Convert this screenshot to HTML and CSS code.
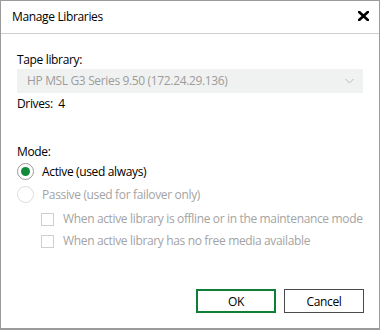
FILE: index.html
```html
<!DOCTYPE html>
<html>
<head>
<meta charset="utf-8">
<link rel="stylesheet" href="styles.css">
</head>
<body>
<div class="dialog">
  <div class="header">
    <span class="title">Manage Libraries</span>
    <svg class="close" width="11" height="10" viewBox="0 0 11 10"><path d="M1.2 1 L9.8 9 M9.8 1 L1.2 9" stroke="#000" stroke-width="2.6" stroke-linecap="square"/></svg>
  </div>
  <div class="content">
    <div class="label">Tape library:</div>
    <div class="select">
      <span>HP MSL G3 Series 9.50 (172.24.29.136)</span>
      <svg width="9" height="6" viewBox="0 0 9 6"><path d="M0.5 1 L4.5 5 L8.5 1" fill="none" stroke="#b8b8b8" stroke-width="1"/></svg>
    </div>
    <div class="drives">Drives:&nbsp; 4</div>
    <div class="mode">Mode:</div>
    <div class="row radio-row">
      <span class="radio on"><span class="dot"></span></span>
      <span>Active (used always)</span>
    </div>
    <div class="row radio-row disabled">
      <span class="radio"></span>
      <span>Passive (used for failover only)</span>
    </div>
    <div class="row check-row disabled first">
      <span class="check"></span>
      <span class="clip">When active library is offline or in the maintenance mode</span>
    </div>
    <div class="row check-row disabled">
      <span class="check"></span>
      <span>When active library has no free media available</span>
    </div>
  </div>
  <div class="buttons">
    <button class="btn ok">OK</button>
    <button class="btn">Cancel</button>
  </div>
</div>
</body>
</html>
```
FILE: styles.css
```css
* { box-sizing: border-box; }
html, body { margin: 0; padding: 0; background: #fff; }
body {
  font-family: "Open Sans", "Noto Sans", sans-serif;
  font-size: 12px;
  letter-spacing: -0.35px;
  color: #000;
}
.dialog {
  width: 380px;
  height: 330px;
  border: 1px solid #9b9b9b;
  border-bottom-width: 2px;
  display: flex;
  flex-direction: column;
  background: #fff;
}
.header {
  height: 33px;
  border-bottom: 1px solid #cfcfcf;
  display: flex;
  align-items: center;
  justify-content: space-between;
  padding: 0 10px 1px 11px;
  flex-shrink: 0;
}
.title { line-height: 16px; }
.close { display: block; margin-top: -2px; }
.content {
  padding: 18px 16px 0 16px;
  line-height: 16px;
}
.select {
  margin-top: 1px;
  height: 24px;
  background: #f0f2f1;
  color: #9c9c9c;
  display: flex;
  align-items: center;
  justify-content: space-between;
  padding: 0 9px 0 10px;
}
.select svg { display: block; }
.drives { margin-top: 3px; }
.mode { margin-top: 32px; }
.row {
  display: flex;
  align-items: center;
  height: 23px;
  white-space: nowrap;
}
.disabled { color: #a3a3a3; }
.radio {
  width: 17px;
  height: 17px;
  border-radius: 50%;
  border: 1px solid #dcdcdc;
  margin: 0 8px 0 0;
  display: flex;
  align-items: center;
  justify-content: center;
  flex-shrink: 0;
}
.radio.on { border-color: #9a9a9a; }
.dot {
  width: 9px;
  height: 9px;
  border-radius: 50%;
  background: #128a3c;
}
.check-row { padding-left: 24px; height: 22px; }
.check-row.first { margin-top: 2px; }
.check {
  width: 13px;
  height: 13px;
  border: 1px solid #cfcfcf;
  margin-right: 9px;
  flex-shrink: 0;
}
.clip { overflow: hidden; }
.buttons {
  margin-top: auto;
  display: flex;
  justify-content: flex-end;
  gap: 8px;
  padding: 0 15px 15px 0;
}
.btn {
  width: 80px;
  height: 24px;
  background: #fff;
  border: 1px solid #4a4a4a;
  font-family: inherit;
  font-size: 12px;
  letter-spacing: -0.35px;
  color: #000;
  padding: 0;
}
.btn.ok { border: 2px solid #0f7f35; }
```
